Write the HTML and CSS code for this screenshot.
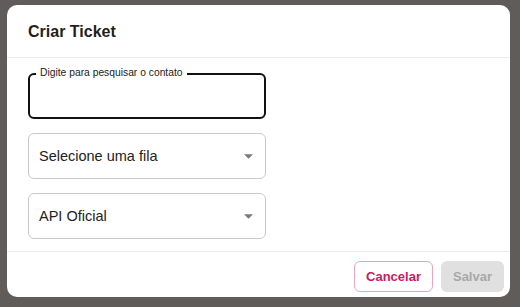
FILE: index.html
```html
<!DOCTYPE html>
<html lang="pt">
<head>
<meta charset="utf-8">
<link rel="stylesheet" href="styles.css">
</head>
<body>
<div class="dialog">
  <div class="header">Criar Ticket</div>
  <div class="content">
    <div class="field focused">
      <span class="label">Digite para pesquisar o contato</span>
    </div>
    <div class="field select">
      <span class="value">Selecione uma fila</span>
      <svg class="arrow" width="9" height="5" viewBox="0 0 10 5"><path d="M0 0L5 5L10 0Z" fill="#7a7a7a"/></svg>
    </div>
    <div class="field select">
      <span class="value">API Oficial</span>
      <svg class="arrow" width="9" height="5" viewBox="0 0 10 5"><path d="M0 0L5 5L10 0Z" fill="#7a7a7a"/></svg>
    </div>
  </div>
  <div class="footer">
    <button class="btn cancel">Cancelar</button>
    <button class="btn save">Salvar</button>
  </div>
</div>
</body>
</html>
```
FILE: styles.css
```css
html, body {
  margin: 0;
  padding: 0;
}
body {
  background: #5f5c59;
  width: 520px;
  height: 307px;
  overflow: hidden;
  font-family: "Liberation Sans", Arial, sans-serif;
  padding: 5px 0 0 7px;
  box-sizing: border-box;
}
.dialog {
  width: 503px;
  height: 292px;
  background: #fff;
  border-radius: 10px;
  display: flex;
  flex-direction: column;
  box-sizing: border-box;
}
.header {
  height: 53px;
  box-sizing: border-box;
  padding: 18px 0 0 21px;
  font-size: 16px;
  font-weight: bold;
  color: #1f1f1f;
  border-bottom: 1px solid #ececec;
}
.content {
  padding: 15px 0 0 21px;
  display: flex;
  flex-direction: column;
  gap: 14px;
  height: 194px;
  box-sizing: border-box;
  border-bottom: 1px solid #ececec;
}
.field {
  position: relative;
  width: 238px;
  height: 46px;
  box-sizing: border-box;
  border: 1px solid #c9c9c9;
  border-radius: 6px;
  display: flex;
  align-items: center;
  padding: 0 10px;
}
.field.focused {
  border: 2px solid #111;
}
.label {
  position: absolute;
  top: -9px;
  left: 6px;
  background: #fff;
  padding: 0 4px;
  font-size: 10.3px;
  color: #222;
  line-height: 14px;
}
.value {
  font-size: 14.5px;
  color: #222;
  flex: 1;
}
.arrow {
  margin-right: 2px;
}
.footer {
  flex: 1;
  display: flex;
  justify-content: flex-end;
  align-items: flex-start;
  gap: 8px;
  padding: 9px 6px 0 0;
}
.btn {
  height: 31px;
  border-radius: 6px;
  font-family: "Liberation Sans", Arial, sans-serif;
  font-size: 13px;
  font-weight: bold;
  padding: 0;
}
.cancel {
  width: 79px;
  background: #fff;
  border: 1px solid #eba4bd;
  color: #d1185c;
}
.save {
  width: 63px;
  background: #e0e0e0;
  border: none;
  color: #a8a8a8;
}
```
